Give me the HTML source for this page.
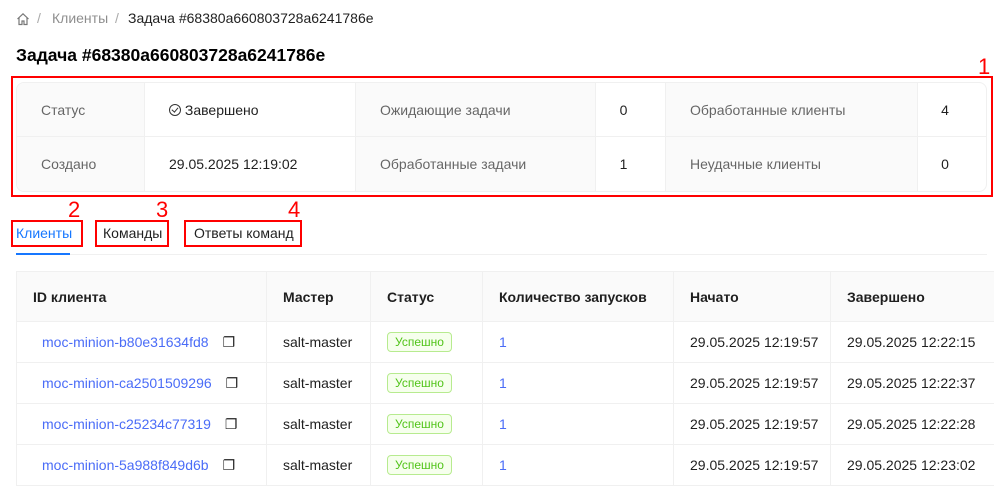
<!DOCTYPE html>
<html><head><meta charset="utf-8"><style>
*{box-sizing:border-box;margin:0;padding:0}
body{width:994px;height:483px;overflow:hidden;background:#fff;font-family:"Liberation Sans","Noto Sans CJK SC",sans-serif;font-size:14px;color:rgba(0,0,0,.88);position:relative}
.a{position:absolute;white-space:nowrap}
.red{position:absolute;border:2px solid #f00}
.num{position:absolute;color:#f00;font-size:22px;line-height:22px}
table{border-collapse:separate;border-spacing:0;position:absolute;table-layout:fixed}
td,th{border-right:1px solid #f0f0f0;border-bottom:1px solid #f0f0f0;text-align:left;font-weight:normal;white-space:nowrap;overflow:hidden}
.info{left:16px;top:82px;width:971px;border:1px solid #f0f0f0;border-radius:8px;overflow:hidden}
.info td{height:54px;padding:0 24px}
.info td.l{background:#fafafa;color:rgba(0,0,0,.6)}
.info td.c{text-align:center;padding:0 14px 0 0}
.info tr:last-child td{border-bottom:none}
.info td:last-child{border-right:none}
.main{left:16px;top:271px;width:1000px;border-top:1px solid #f0f0f0;border-left:1px solid #f0f0f0}
.main th{background:#fafafa;font-weight:bold;height:50px;padding:0 16px}
.main td{height:41px;padding:0 16px}
.lk{color:#4a6cf7}
.tag{display:inline-block;border:1px solid #b7eb8f;background:#f6ffed;color:#52c41a;font-size:12px;line-height:18px;padding:0 7px;border-radius:4px}
</style></head><body>
<svg class="a" style="left:16px;top:12px" width="14" height="14" viewBox="0 0 14 14" fill="none" stroke="#777" stroke-width="1.2"><path d="M1.5 7 7 1.8 12.5 7M3 5.8V12.5h3V9h2v3.5h3V5.8"/></svg>
<div class="a" style="left:37px;top:10px;color:#aaa">/</div>
<div class="a" style="left:52px;top:10px;color:rgba(0,0,0,.45)">Клиенты</div>
<div class="a" style="left:115px;top:10px;color:#aaa">/</div>
<div class="a" style="left:128px;top:10px">Задача #68380a660803728a6241786e</div>
<div class="a" style="left:16px;top:45px;font-size:17.5px;font-weight:bold;color:#000">Задача #68380a660803728a6241786e</div>

<table class="info">
<tr><td class="l" style="width:128px">Статус</td><td style="width:211px"><span style="display:inline-block;width:12px;height:12px;border:1.2px solid #333;border-radius:50%;vertical-align:-1px;position:relative"><span style="position:absolute;left:2.5px;top:1.5px;width:3.5px;height:6px;border-right:1.2px solid #333;border-bottom:1.2px solid #333;transform:rotate(40deg)"></span></span> Завершено</td><td class="l" style="width:240px">Ожидающие задачи</td><td class="c" style="width:70px">0</td><td class="l" style="width:252px">Обработанные клиенты</td><td class="c">4</td></tr>
<tr><td class="l">Создано</td><td>29.05.2025 12:19:02</td><td class="l">Обработанные задачи</td><td class="c">1</td><td class="l">Неудачные клиенты</td><td class="c">0</td></tr>
</table>
<div class="red" style="left:11px;top:76px;width:982px;height:121px"></div>
<div class="num" style="left:978px;top:56px">1</div>

<div class="a" style="left:16px;top:225px;color:#1677ff">Клиенты</div>
<div class="a" style="left:103px;top:225px">Команды</div>
<div class="a" style="left:194px;top:225px">Ответы команд</div>
<div class="a" style="left:16px;top:254px;width:971px;height:1px;background:#f0f0f0"></div>
<div class="a" style="left:16px;top:253px;width:54px;height:2px;background:#1677ff"></div>
<div class="red" style="left:11px;top:220px;width:72px;height:27px"></div>
<div class="red" style="left:95px;top:220px;width:74px;height:27px"></div>
<div class="red" style="left:184px;top:220px;width:118px;height:27px"></div>
<div class="num" style="left:68px;top:199px">2</div>
<div class="num" style="left:156px;top:199px">3</div>
<div class="num" style="left:288px;top:199px">4</div>

<table class="main">
<colgroup><col style="width:250px"><col style="width:104px"><col style="width:112px"><col style="width:191px"><col style="width:157px"><col style="width:186px"></colgroup>
<tr><th>ID клиента</th><th>Мастер</th><th>Статус</th><th>Количество запусков</th><th>Начато</th><th>Завершено</th></tr>
<tr><td><span class="lk" style="margin-left:9px">moc-minion-b80e31634fd8</span><span style="margin-left:14px">❐</span></td><td>salt-master</td><td><span class="tag">Успешно</span></td><td class="lk">1</td><td>29.05.2025 12:19:57</td><td>29.05.2025 12:22:15</td></tr>
<tr><td><span class="lk" style="margin-left:9px">moc-minion-ca2501509296</span><span style="margin-left:14px">❐</span></td><td>salt-master</td><td><span class="tag">Успешно</span></td><td class="lk">1</td><td>29.05.2025 12:19:57</td><td>29.05.2025 12:22:37</td></tr>
<tr><td><span class="lk" style="margin-left:9px">moc-minion-c25234c77319</span><span style="margin-left:14px">❐</span></td><td>salt-master</td><td><span class="tag">Успешно</span></td><td class="lk">1</td><td>29.05.2025 12:19:57</td><td>29.05.2025 12:22:28</td></tr>
<tr><td><span class="lk" style="margin-left:9px">moc-minion-5a988f849d6b</span><span style="margin-left:14px">❐</span></td><td>salt-master</td><td><span class="tag">Успешно</span></td><td class="lk">1</td><td>29.05.2025 12:19:57</td><td>29.05.2025 12:23:02</td></tr>
</table>
</body></html>
